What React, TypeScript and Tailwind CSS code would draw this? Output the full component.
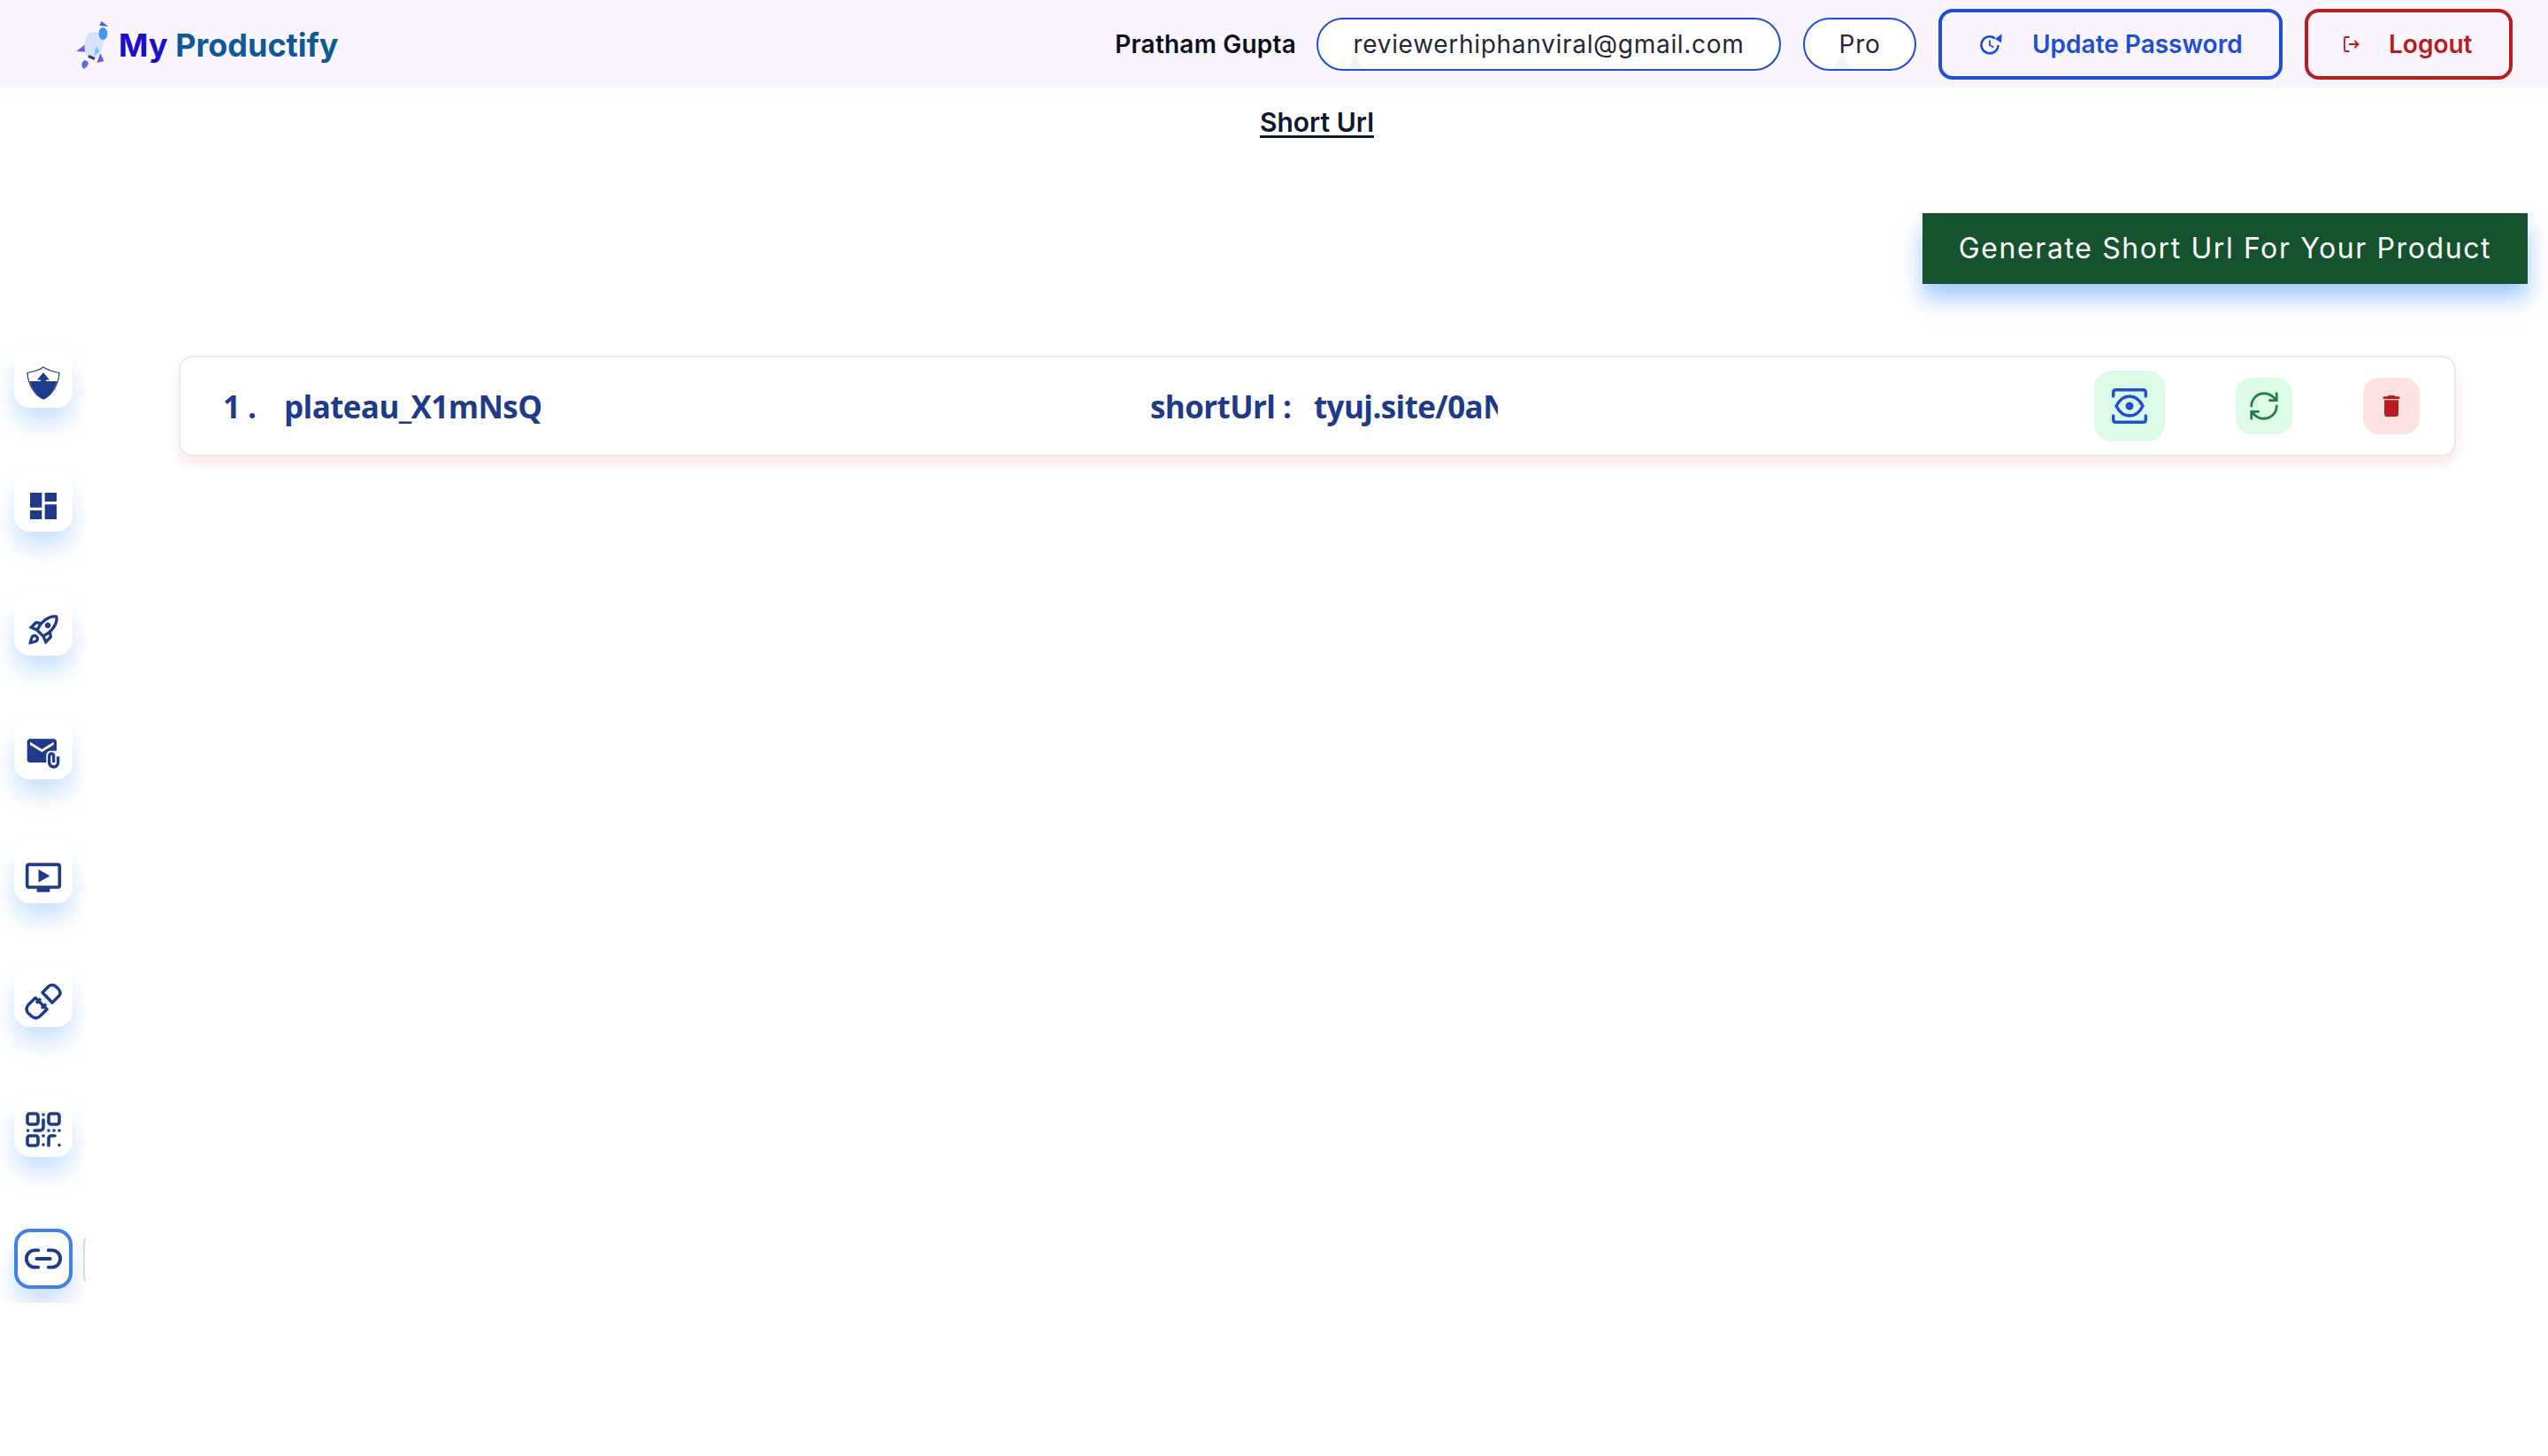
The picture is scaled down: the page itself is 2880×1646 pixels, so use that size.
import { RefreshCw, Link2 } from 'lucide-react';
import {
  MdDashboard,
  MdOutlineRocketLaunch,
  MdAttachEmail,
  MdOutlineOndemandVideo,
  MdDelete,
} from 'react-icons/md';

function ShieldIcon() {
  return (
    <svg width="38" height="38" viewBox="0 0 38 38" fill="none">
      <path d="M19 1 C24 4.500 29 6 37 7.500 C36.500 20 29 33 19 37 C9 33 1.500 20 1 7.500 C9 6 14 4.500 19 1 Z" stroke="#1e3a8a" strokeWidth="1.200" />
      <path d="M3.500 17 H34.500 C32 26 26 33 21 36.500 C19.500 37.300 18.500 37.300 17 36.500 C12 33 6 26 3.500 17 Z" fill="#1e3a8a" />
      <path d="M19 7 L26 15.500 H22 V20 H16 V15.500 H12 Z" fill="#1e3a8a" />
    </svg>
  );
}

function ChainIcon() {
  return (
    <svg width="42" height="42" viewBox="0 0 42 42" fill="none" stroke="#1e3a8a" strokeWidth="3.400" strokeLinejoin="round">
      <path d="M20 11 L27 4 C29.500 2 33 2 36 5 L38 7 C40.500 10 40.500 13 38.500 15 L31 22.500 Z" />
      <path d="M12 17 L4 25 C1.500 28 1.500 31 3.500 34 L8 38 C11 40.500 14 40.500 17 38 L25 30 Z" />
      <path d="M13 23 L18 18 M19 29 L24 24" />
    </svg>
  );
}

function QrIcon() {
  return (
    <svg width="40" height="40" viewBox="0 0 40 40" fill="none" stroke="#1e3a8a" strokeWidth="3.600" strokeLinecap="round" strokeLinejoin="round">
      <rect x="2" y="2" width="12" height="12" rx="2.500" />
      <rect x="26" y="2" width="12" height="12" rx="2.500" />
      <rect x="2" y="27" width="12" height="11" rx="2.500" />
      <path d="M20 3 V3.100 M20 9 V17 C20 20 18 21 15 21 H10 M2.500 21 V21.100 M26 21 V21.100 M32 21 H32.100 M38 21 V21.100 M20 27 V27.100 M20 37 V37.100 M26 38 V30 C26 28 27 27 29 27 H33 M38 37.500 V37.600" />
    </svg>
  );
}

function ScanEyeIcon() {
  return (
    <svg width="40" height="40" viewBox="0 0 40 40" fill="none" stroke="#1d4ed8" strokeWidth="3.400" strokeLinecap="round">
      <path d="M1.700 9 V4.500 C1.700 2.500 2.700 1.700 4.500 1.700 H35.500 C37.300 1.700 38.300 2.500 38.300 4.500 V9" />
      <path d="M1.700 31 V35.500 C1.700 37.500 2.700 38.300 4.500 38.300 H35.500 C37.300 38.300 38.300 37.500 38.300 35.500 V31" />
      <path d="M5 20 C9 12 14 9 20 9 C26 9 31 12 35 20 C31 28 26 31 20 31 C14 31 9 28 5 20 Z" />
      <circle cx="20" cy="20" r="4.500" fill="#1d4ed8" stroke="none" />
    </svg>
  );
}

function ClockArrowIcon() {
  return (
    <svg width="25" height="24" viewBox="0 0 25 24" fill="none" stroke="#1d4ed8" strokeWidth="2.600">
      <path d="M17 5.500 A9.500 9.500 0 1 0 20.500 13" />
      <path d="M24.700 0.300 L17 6 L24 10.500 Z" fill="#1d4ed8" stroke="none" />
      <path d="M11 7.500 V13 L15.500 15.500" strokeWidth="1.800" />
    </svg>
  );
}

function LogoutIcon() {
  return (
    <svg width="18" height="18" viewBox="0 0 18 18" fill="none" stroke="#b91c1c" strokeWidth="1.800">
      <path d="M6.500 1 H2.500 C1.500 1 1 1.500 1 2.500 V15.500 C1 16.500 1.500 17 2.500 17 H6.500" />
      <path d="M6 9 H16.500 M12.500 5 L16.500 9 L12.500 13" />
    </svg>
  );
}

function PillMark({ className }: { className: string }) {
  return <div className={`absolute bottom-0 h-[17px] w-[18px] bg-[#f1f5f9] [clip-path:polygon(50%_0,100%_100%,0_100%)] ${className}`} />;
}

function SideButton({ children, active, className }: { children: React.ReactNode; active?: boolean; className?: string }) {
  return (
    <div
      className={`relative flex h-[68px] w-[66px] items-center justify-center rounded-[18px] bg-white shadow-[0_18px_28px_-2px_rgba(96,165,250,0.36)] ${active ? 'border-4 border-[#4080ea]' : ''} ${className ?? ''}`}
    >
      {children}
    </div>
  );
}

export default function App() {
  return (
    <div className="min-h-screen bg-white font-['Inter',sans-serif] text-[#0f172a]">
      {/* Navbar */}
      <header className="flex h-[100px] items-center justify-between bg-[#faf5ff] pl-[86px] pr-[40px]">
        <div className="flex items-center gap-[9px]">
          <svg width="39" height="54" viewBox="0 0 38 54" className="mt-[2px]">
            <path d="M28 0 L36 6 L26 5 Z" fill="#4f58d8" />
            <path d="M11 25 L0 34 L14 35 Z" fill="#6a5ae0" />
            <path d="M27 36 L31 45 L23 47 Z" fill="#6a5ae0" />
            <path d="M9 44 C15 45 15 50 8 54 C5 50 5 47 9 44 Z" fill="#5f6be6" />
            <path d="M13 14 C20 10 29 13 31 19 C30 30 27 38 23 41 C17 44 11 41 10 36 C8 28 9 19 13 14 Z" fill="#d8e2fb" />
            <path d="M21 41 L14 38 L13 41 L20 44 Z" fill="#33415f" />
            <ellipse cx="30" cy="14" rx="5" ry="7" fill="#3f97ee" />
            <path d="M22 28 L26 34 L20 39 Z" fill="#6fbff0" />
          </svg>
          <span className="relative top-[1px] text-[36px] font-bold leading-none">
            <span className="text-[#1d0fc8]">My</span> <span className="text-[#0f5a96]">Productify</span>
          </span>
        </div>
        <div className="flex items-center">
          <span className="mr-[23px] text-[28px] font-semibold tracking-[0.2px] text-[#0b0f1f]">Pratham Gupta</span>
          <div className="relative mr-[25px] flex h-[60px] w-[525px] items-center justify-center overflow-hidden rounded-full border-2 border-[#1d4ed8] bg-white text-[28px] tracking-[0.7px] text-[#1f2937]">
            <PillMark className="left-[33px]" />
            <span className="relative">reviewerhiphanviral@gmail.com</span>
          </div>
          <div className="relative mr-[25px] flex h-[60px] w-[128px] items-center justify-center overflow-hidden rounded-full border-2 border-[#1d4ed8] bg-white text-[28px] tracking-[0.7px] text-[#1f2937]">
            <PillMark className="left-[33px]" />
            <span className="relative">Pro</span>
          </div>
          <button className="mr-[25px] flex h-[80px] w-[389px] items-center rounded-[16px] border-4 border-[#1d4ed8] pl-[43px] text-[28px] font-semibold text-[#1d4ed8]">
            <ClockArrowIcon />
            <span className="ml-[34px]">Update Password</span>
          </button>
          <button className="flex h-[80px] w-[235px] items-center rounded-[16px] border-4 border-[#b91c1c] pl-[40px] text-[28px] font-semibold text-[#b91c1c]">
            <LogoutIcon />
            <span className="ml-[33px]">Logout</span>
          </button>
        </div>
      </header>

      <div className="flex items-start">
        {/* Sidebar */}
        <aside className="flex h-[1373px] w-[97px] shrink-0 flex-col items-start overflow-hidden pl-[16px] pt-[293px]">
          <div className="flex flex-col gap-[72px]">
            <SideButton className="pt-[11px]"><ShieldIcon /></SideButton>
            <SideButton className="pt-[10px]"><MdDashboard size={40} color="#1e3a8a" /></SideButton>
            <SideButton className="pt-[10px]"><MdOutlineRocketLaunch size={40} color="#1e3a8a" /></SideButton>
            <SideButton className="pt-[10px]"><MdAttachEmail size={40} color="#1e3a8a" /></SideButton>
            <SideButton className="pt-[10px]"><MdOutlineOndemandVideo size={44} color="#1e3a8a" /></SideButton>
            <SideButton className="pt-[10px]"><ChainIcon /></SideButton>
            <SideButton className="mt-[7px] pt-[5px]"><QrIcon /></SideButton>
            <SideButton active className="mt-[9px]">
              <Link2 size={46} color="#1e3a8a" strokeWidth={2} />
              {/* tooltip hidden behind the sidebar edge */}
              <div className="absolute left-[74px] top-[4px] h-[54px] w-[60px] rounded-[8px] border-2 border-[#d5dbe3] bg-white" />
            </SideButton>
          </div>
        </aside>

        {/* Main */}
        <main className="min-w-0 flex-1">
          <h1 className="mt-[20px] text-center text-[30px] font-semibold leading-[36px] underline decoration-[3px] underline-offset-[4px]">
            Short Url
          </h1>
          <div className="mt-[85px] flex justify-end pr-[23px]">
            <button className="flex h-[80px] w-[684px] items-center justify-center bg-[#14532d] text-[32px] tracking-[1.6px] text-white shadow-[0_16px_24px_rgba(96,165,250,0.6)]">
              Generate Short Url For Your Product
            </button>
          </div>
          <div className="ml-[105px] mr-[104px] mt-[81px] flex h-[114px] items-center justify-between rounded-[16px] border-2 border-[#e6ebf2] bg-white pl-[48px] pr-[39px] font-['Open_Sans',sans-serif] text-[35px] font-bold tracking-[-0.6px] text-[#1e3a8a] shadow-[0_8px_14px_rgba(248,113,113,0.18)]">
            <div className="relative top-[1px] flex w-[1048px] items-center">
              <span className="w-[69px]">1 .</span>
              <span>plateau_X1mNsQ</span>
            </div>
            <div className="relative top-[1px] flex flex-1 items-center">
              <span className="w-[185px] shrink-0">shortUrl :</span>
              <span className="block w-[208px] overflow-hidden whitespace-nowrap">tyuj.site/0aNxYz</span>
            </div>
            <div className="flex items-center">
              <div className="flex h-[80px] w-[80px] items-center justify-center rounded-[20px] bg-[#dcfce7]">
                <ScanEyeIcon />
              </div>
              <div className="ml-[80px] flex h-[64px] w-[64px] items-center justify-center rounded-[18px] bg-[#dcfce7]">
                <RefreshCw size={38} color="#2b7a4b" strokeWidth={1.75} />
              </div>
              <div className="ml-[80px] flex h-[64px] w-[64px] items-center justify-center rounded-[18px] bg-[#fee2e2]">
                <MdDelete size={32} color="#b91c1c" />
              </div>
            </div>
          </div>
        </main>
      </div>
    </div>
  );
}
